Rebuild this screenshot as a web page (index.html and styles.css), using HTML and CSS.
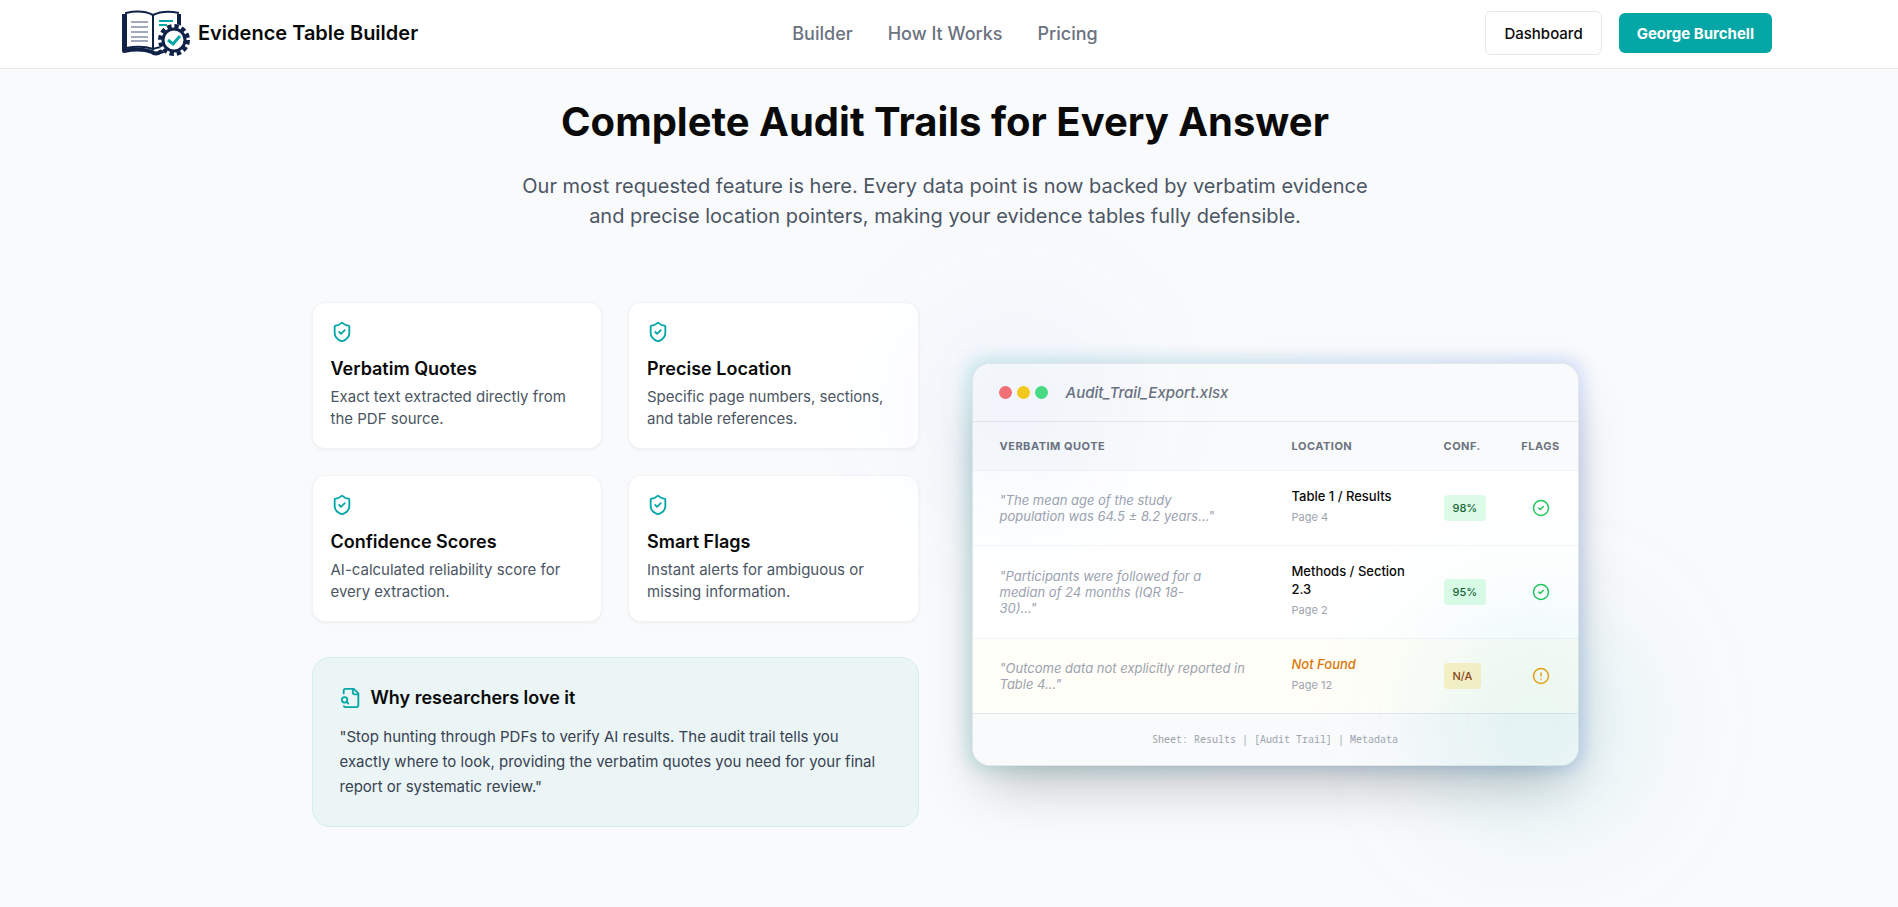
FILE: index.html
```html
<!DOCTYPE html>
<html lang="en">
<head>
    <meta charset="UTF-8">
    <meta name="viewport" content="width=device-width, initial-scale=1.0">
    <title>Evidence Table Builder</title>
    <link rel="stylesheet" href="styles.css">
</head>
<body>
<svg class="sprite" aria-hidden="true">
    <symbol id="shield-check" viewBox="0 0 24 24">
        <path d="M20 13c0 5-3.500 7.500-7.660 8.950a1 1 0 0 1-.67-.01C7.500 20.500 4 18 4 13V6a1 1 0 0 1 1-1c2 0 4.500-1.200 6.240-2.720a1.170 1.170 0 0 1 1.520 0C14.510 3.810 17 5 19 5a1 1 0 0 1 1 1z"/>
        <path d="m9 12 2 2 4-4"/>
    </symbol>
    <symbol id="circle-check" viewBox="0 0 24 24">
        <circle cx="12" cy="12" r="10"/>
        <path d="m9 12 2 2 4-4"/>
    </symbol>
    <symbol id="circle-alert" viewBox="0 0 24 24">
        <circle cx="12" cy="12" r="10"/>
        <path d="M12 8v4M12 16h.01"/>
    </symbol>
    <symbol id="file-search" viewBox="0 0 24 24">
        <path d="M14 2v4a2 2 0 0 0 2 2h4"/>
        <path d="M4.270 21A2 2 0 0 0 6 22h12a2 2 0 0 0 2-2V7l-5-5H6a2 2 0 0 0-2 2v3"/>
        <circle cx="5" cy="14" r="3"/>
        <path d="m9 18-1.500-1.500"/>
    </symbol>
</svg>

<header class="site-header">
    <div class="header-inner">
        <a class="brand" href="#">
            <svg class="logo" viewBox="0 0 72 48" aria-hidden="true">
                <path d="M6 5v37c10-2 20-2 28 1 2 2 6 2 8 0l6-2" fill="none" stroke="#0f2147" stroke-width="4" stroke-linejoin="round"/>
                <path d="M8 4c9-2 19-2 27 2v34c-8-3-17-3-27-1z" fill="#fff" stroke="#0f2147" stroke-width="2"/>
                <path d="M35 6c8-4 17-4 26-2v34c-9-2-18-1-26 2z" fill="#fff"/>
                <path d="M35 40V6c8-4 17-4 26-2M35 40c3-1 6-2 9-2" fill="none" stroke="#0f2147" stroke-width="2"/>
                <path d="M61 5v13" stroke="#0f2147" stroke-width="4"/>
                <path d="M13 13h17M13 18h17M13 23h17M13 28h17M13 32h17" stroke="#46557a" stroke-width="1.200"/>
                <path d="M41 12h14M41 16h8" stroke="#05a6a6" stroke-width="2"/>
                <circle cx="56" cy="31" r="16" fill="#fff"/>
                <circle cx="56" cy="31" r="14" fill="none" stroke="#0f2147" stroke-width="4" stroke-dasharray="4.400 2.930"/>
                <circle cx="56" cy="31" r="11" fill="#fff" stroke="#0f2147" stroke-width="3"/>
                <path d="m50 31 5 4 7-8" fill="none" stroke="#05a6a6" stroke-width="3"/>
            </svg>
            <span>Evidence Table Builder</span>
        </a>
        <nav class="main-nav">
            <a href="#">Builder</a>
            <a href="#">How It Works</a>
            <a href="#">Pricing</a>
        </nav>
        <div class="actions">
            <button class="btn btn-outline" type="button">Dashboard</button>
            <button class="btn btn-primary" type="button">George Burchell</button>
        </div>
    </div>
</header>

<main class="audit">
    <div class="intro">
        <h1>Complete Audit Trails for Every Answer</h1>
        <p>Our most requested feature is here. Every data point is now backed by verbatim evidence and precise location pointers, making your evidence tables fully defensible.</p>
    </div>

    <div class="columns">
        <div class="features">
            <div class="feature-grid">
                <div class="card">
                    <svg class="icon"><use href="#shield-check"/></svg>
                    <h3>Verbatim Quotes</h3>
                    <p>Exact text extracted directly from the PDF source.</p>
                </div>
                <div class="card">
                    <svg class="icon"><use href="#shield-check"/></svg>
                    <h3>Precise Location</h3>
                    <p>Specific page numbers, sections, and table references.</p>
                </div>
                <div class="card">
                    <svg class="icon"><use href="#shield-check"/></svg>
                    <h3>Confidence Scores</h3>
                    <p>AI-calculated reliability score for every extraction.</p>
                </div>
                <div class="card">
                    <svg class="icon"><use href="#shield-check"/></svg>
                    <h3>Smart Flags</h3>
                    <p>Instant alerts for ambiguous or missing information.</p>
                </div>
            </div>
            <div class="callout">
                <h3><svg class="icon"><use href="#file-search"/></svg>Why researchers love it</h3>
                <p>"Stop hunting through PDFs to verify AI results. The audit trail tells you exactly where to look, providing the verbatim quotes you need for your final report or systematic review."</p>
            </div>
        </div>

        <div class="preview">
            <div class="halo"></div>
            <div class="window">
                <div class="window-bar">
                    <span class="dot red"></span>
                    <span class="dot yellow"></span>
                    <span class="dot green"></span>
                    <span class="filename">Audit_Trail_Export.xlsx</span>
                </div>
                <table>
                    <thead>
                        <tr>
                            <th class="col-quote">Verbatim Quote</th>
                            <th class="col-location">Location</th>
                            <th class="col-conf">Conf.</th>
                            <th class="col-flags">Flags</th>
                        </tr>
                    </thead>
                    <tbody>
                        <tr>
                            <td><p class="quote">"The mean age of the study population was 64.5 ± 8.2 years..."</p></td>
                            <td><div class="place">Table 1 / Results</div><div class="page">Page 4</div></td>
                            <td><span class="badge">98%</span></td>
                            <td class="flag"><svg class="icon"><use href="#circle-check"/></svg></td>
                        </tr>
                        <tr>
                            <td><p class="quote">"Participants were followed for a median of 24 months (IQR 18-30)..."</p></td>
                            <td><div class="place">Methods / Section 2.3</div><div class="page">Page 2</div></td>
                            <td><span class="badge">95%</span></td>
                            <td class="flag"><svg class="icon"><use href="#circle-check"/></svg></td>
                        </tr>
                        <tr class="missing">
                            <td><p class="quote">"Outcome data not explicitly reported in Table 4..."</p></td>
                            <td><div class="place">Not Found</div><div class="page">Page 12</div></td>
                            <td><span class="badge">N/A</span></td>
                            <td class="flag"><svg class="icon"><use href="#circle-alert"/></svg></td>
                        </tr>
                    </tbody>
                </table>
                <div class="window-footer">Sheet: Results | [Audit Trail] | Metadata</div>
            </div>
            <div class="glow glow-teal"></div>
            <div class="glow glow-blue"></div>
        </div>
    </div>
</main>
</body>
</html>
```
FILE: styles.css
```css
* {
    box-sizing: border-box;
}
body {
    margin: 0;
    font-family: Inter, "Liberation Sans", sans-serif;
    font-size: 16px;
    color: #0a0a0a;
    background-color: #f9fafc;
    overflow-x: hidden;
}
h1, h3, p {
    margin: 0;
}
a {
    color: inherit;
    text-decoration: none;
}
.sprite {
    display: none;
}
.icon {
    display: block;
    width: 22px;
    height: 22px;
    fill: none;
    stroke: #05a6a6;
    stroke-width: 2;
    stroke-linecap: round;
    stroke-linejoin: round;
}

/* header */
.site-header {
    background: #fff;
    border-bottom: 1px solid #e5e7eb;
    padding-right: 8px;
}
.header-inner {
    display: grid;
    grid-template-columns: 1fr auto 1fr;
    align-items: center;
    max-width: 1690px;
    height: 68px;
    margin: 0 auto;
    padding: 0 18px 2px;
}
.brand {
    display: flex;
    align-items: center;
    gap: 8px;
    font-size: 20px;
    font-weight: 600;
}
.logo {
    width: 72px;
    height: 48px;
}
.main-nav {
    display: flex;
    gap: 35px;
    font-size: 18px;
    font-weight: 500;
    color: #6b7280;
}
.actions {
    display: flex;
    align-items: center;
    justify-content: flex-end;
    gap: 17px;
}
.btn {
    height: 40px;
    padding: 0 18px;
    border: 0;
    border-radius: 6px;
    font: 500 15px Inter, "Liberation Sans", sans-serif;
    color: #0a0a0a;
}
.btn-outline {
    height: 44px;
    border: 1px solid #e5e7eb;
    background: #fff;
}
.btn-primary {
    background: #05a6a6;
    color: #fff;
    font-weight: 700;
}

/* audit trail section */
.audit {
    max-width: 1275px;
    margin: 0 auto;
    padding: 27px 8px 78px 0;
}
.intro {
    max-width: 860px;
    margin: 0 auto 71px;
    text-align: center;
}
.intro h1 {
    margin-bottom: 23px;
    font-size: 40px;
    line-height: 52px;
    font-weight: 700;
}
.intro p {
    font-size: 20px;
    line-height: 30px;
    color: #4b5563;
}
.columns {
    display: grid;
    grid-template-columns: 1fr 1fr;
    align-items: center;
    gap: 53px;
}
.feature-grid {
    display: grid;
    grid-template-columns: 1fr 1fr;
    gap: 26px;
    margin-bottom: 35px;
}
.card {
    padding: 18px;
    background: #fff;
    border: 1px solid #f3f4f6;
    border-radius: 13px;
    box-shadow: 0 1px 3px rgba(0, 0, 0, 0.06);
}
.card .icon {
    margin-bottom: 13px;
}
.card h3, .callout h3 {
    font-size: 18px;
    line-height: 26px;
    font-weight: 600;
}
.card p {
    margin-top: 4px;
    font-size: 15px;
    line-height: 22px;
    color: #4b5563;
}
.callout {
    padding: 27px;
    background: #ebf5f6;
    border: 1px solid #d3eeec;
    border-radius: 18px;
}
.callout h3 {
    display: flex;
    align-items: center;
    gap: 9px;
    margin-bottom: 13px;
}
.callout p {
    font-size: 15px;
    line-height: 25px;
    color: #374151;
}

/* spreadsheet preview */
.preview {
    position: relative;
}
.halo {
    position: absolute;
    inset: -4px;
    border-radius: 18px;
    background: linear-gradient(to right, #05a6a6, #2563eb);
    opacity: 0.2;
    filter: blur(9px);
}
.window {
    position: relative;
    overflow: hidden;
    background: #fff;
    border: 1px solid #e5e7eb;
    border-radius: 18px;
    box-shadow: 0 28px 55px -13px rgba(0, 0, 0, 0.25);
}
.window-bar {
    display: flex;
    align-items: center;
    gap: 5px;
    height: 58px;
    padding: 0 26px;
    background: #f9fafb;
    border-bottom: 1px solid #e5e7eb;
}
.dot {
    width: 13px;
    height: 13px;
    border-radius: 50%;
}
.red {
    background: #f87171;
}
.yellow {
    background: #facc15;
}
.green {
    background: #4ade80;
}
.filename {
    margin-left: 13px;
    font-size: 15px;
    font-weight: 500;
    font-style: italic;
    color: #6b7280;
}
table {
    width: 100%;
    table-layout: fixed;
    border-collapse: collapse;
}
th {
    height: 49px;
    padding: 0 18px;
    background: #f9fafb;
    font-size: 11px;
    font-weight: 700;
    letter-spacing: 0.5px;
    text-align: left;
    text-transform: uppercase;
    color: #6b7280;
}
th:first-child, td:first-child {
    padding-left: 27px;
}
.col-location {
    width: 152px;
}
.col-conf {
    width: 78px;
}
.col-flags {
    width: 74px;
}
th.col-flags, td.flag {
    padding: 0;
    text-align: center;
}
td {
    padding: 16px 18px;
    border-top: 1px solid #f3f4f6;
    font-size: 13px;
}
.quote {
    max-width: 220px;
    line-height: 16px;
    font-style: italic;
    color: #9ca3af;
}
.place {
    line-height: 18px;
    font-weight: 500;
}
.page {
    margin-top: 4px;
    padding-bottom: 4px;
    font-size: 11px;
    line-height: 16px;
    color: #9ca3af;
}
.badge {
    display: inline-block;
    padding: 0 9px;
    border-radius: 4px;
    background: #dcfce7;
    font-size: 11px;
    line-height: 26px;
    font-weight: 500;
    color: #166534;
}
.flag .icon {
    width: 18px;
    height: 18px;
    margin: 0 auto;
    stroke: #22c55e;
}
.missing {
    background: #fffef8;
}
.missing .quote {
    max-width: none;
}
.missing .place {
    font-style: italic;
    color: #d97706;
}
.missing .badge {
    background: #fef3c7;
    color: #92400e;
}
.missing .icon {
    stroke: #f59e0b;
}
.window-footer {
    border-top: 1px solid #e5e7eb;
    background: #f9fafb;
    font-family: "Noto Sans Mono", "DejaVu Sans Mono", monospace;
    font-size: 10px;
    line-height: 51px;
    text-align: center;
    color: #9ca3af;
}
.glow {
    position: absolute;
    width: 176px;
    height: 176px;
    border-radius: 50%;
    filter: blur(70px);
    pointer-events: none;
}
.glow-teal {
    right: -44px;
    bottom: -44px;
    background: rgba(5, 166, 166, 0.15);
}
.glow-blue {
    top: -44px;
    left: -44px;
    background: rgba(37, 99, 235, 0.06);
}
```
